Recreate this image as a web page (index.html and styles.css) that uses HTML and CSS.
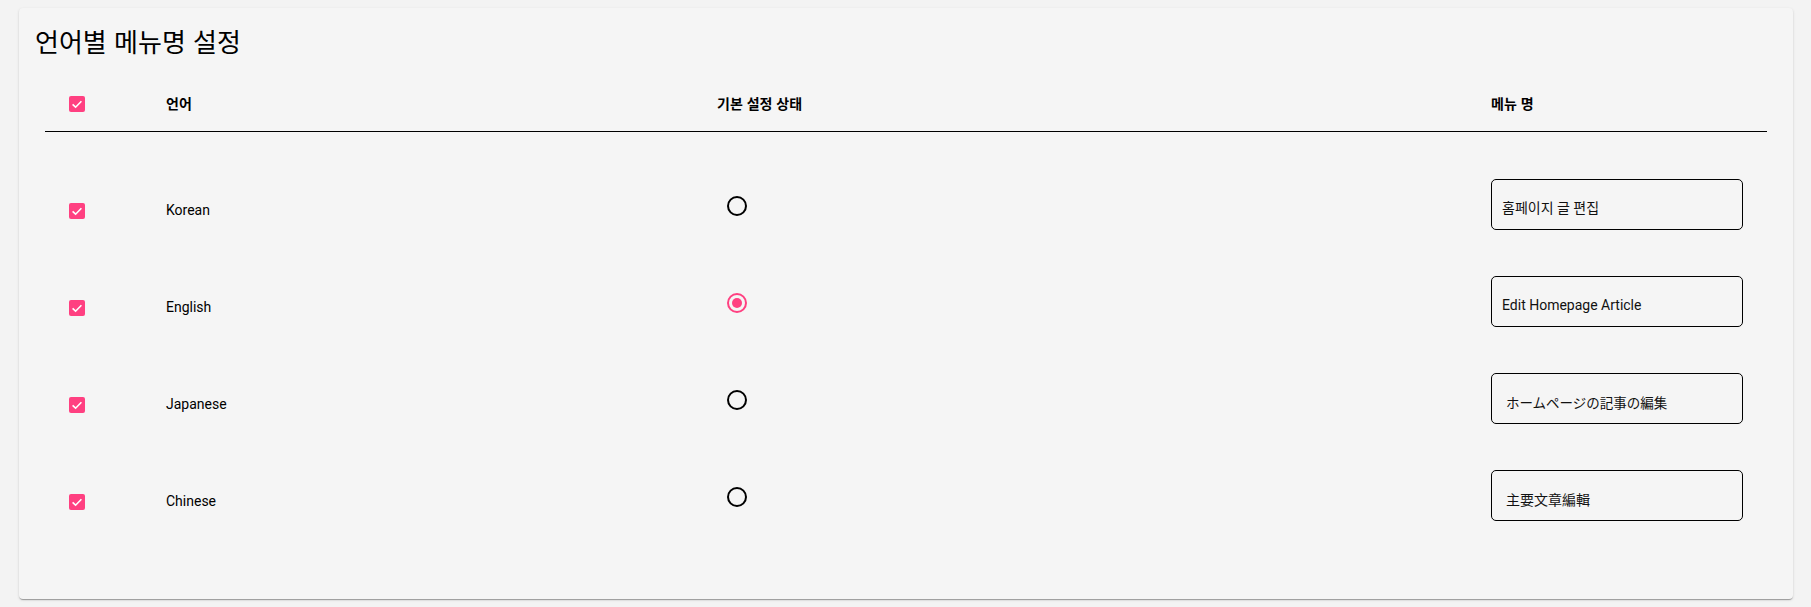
FILE: index.html
```html
<!DOCTYPE html>
<html lang="ko">
<head>
<meta charset="utf-8">
<title>언어별 메뉴명 설정</title>
<link rel="stylesheet" href="styles.css">
</head>
<body>
<div class="page">
  <section class="card">
    <h1 class="title">언어별 메뉴명 설정</h1>
    <div class="table">
      <div class="row head">
        <div class="cell c-check"><span class="checkbox"><svg viewBox="0 0 16 16" width="16" height="16"><polyline points="3.6,8.4 6.6,11.2 12.4,5.2" fill="none" stroke="#fff" stroke-width="1.6"/></svg></span></div>
        <div class="cell c-lang">언어</div>
        <div class="cell c-default">기본 설정 상태</div>
        <div class="cell c-name">메뉴 명</div>
      </div>
      <div class="body">
        <div class="row item">
          <div class="cell c-check"><span class="checkbox"><svg viewBox="0 0 16 16" width="16" height="16"><polyline points="3.6,8.4 6.6,11.2 12.4,5.2" fill="none" stroke="#fff" stroke-width="1.6"/></svg></span></div>
          <div class="cell c-lang">Korean</div>
          <div class="cell c-default"><span class="radio"></span></div>
          <div class="cell c-name"><div class="input" lang="ko">홈페이지 글 편집</div></div>
        </div>
        <div class="row item">
          <div class="cell c-check"><span class="checkbox"><svg viewBox="0 0 16 16" width="16" height="16"><polyline points="3.6,8.4 6.6,11.2 12.4,5.2" fill="none" stroke="#fff" stroke-width="1.6"/></svg></span></div>
          <div class="cell c-lang">English</div>
          <div class="cell c-default"><span class="radio checked"></span></div>
          <div class="cell c-name"><div class="input" lang="en">Edit Homepage Article</div></div>
        </div>
        <div class="row item">
          <div class="cell c-check"><span class="checkbox"><svg viewBox="0 0 16 16" width="16" height="16"><polyline points="3.6,8.4 6.6,11.2 12.4,5.2" fill="none" stroke="#fff" stroke-width="1.6"/></svg></span></div>
          <div class="cell c-lang">Japanese</div>
          <div class="cell c-default"><span class="radio"></span></div>
          <div class="cell c-name"><div class="input cjk-ja" lang="ja">ホームページの記事の編集</div></div>
        </div>
        <div class="row item">
          <div class="cell c-check"><span class="checkbox"><svg viewBox="0 0 16 16" width="16" height="16"><polyline points="3.6,8.4 6.6,11.2 12.4,5.2" fill="none" stroke="#fff" stroke-width="1.6"/></svg></span></div>
          <div class="cell c-lang">Chinese</div>
          <div class="cell c-default"><span class="radio"></span></div>
          <div class="cell c-name"><div class="input cjk-zh" lang="zh-Hant">主要文章編輯</div></div>
        </div>
      </div>
    </div>
  </section>
</div>
</body>
</html>
```

FILE: styles.css
```css
html, body {
  margin: 0;
  padding: 0;
  background: #f3f3f3;
}
body {
  font-family: Roboto, "Noto Sans CJK KR", sans-serif;
  color: #000;
}
.page {
  padding: 8px 18px 8px 19px;
  height: 607px;
  box-sizing: border-box;
}
.card {
  height: 591px;
  box-sizing: border-box;
  background: #f5f5f5;
  border-radius: 4px;
  box-shadow: 0 2px 1px -1px rgba(0,0,0,.2), 0 1px 1px 0 rgba(0,0,0,.14), 0 1px 3px 0 rgba(0,0,0,.12);
  padding: 17px 17px 16px 16px;
}
.title {
  margin: 0;
  font-family: "Noto Sans CJK KR", sans-serif;
  font-weight: 400;
  font-size: 26px;
  line-height: 32px;
}
.table {
  margin: 18px 9px 0 10px;
}
.row {
  display: grid;
  grid-template-columns: 121px 551px 774px 1fr;
}
.head {
  height: 56px;
  align-items: center;
  border-bottom: 1px solid #000;
  font-family: "Noto Sans CJK KR", sans-serif;
  font-weight: 700;
  font-size: 14px;
  line-height: 16px;
}
.head .c-check {
  padding-left: 24px;
  display: flex;
  padding-top: 1px;
}
.body {
  padding-top: 24px;
}
.item {
  height: 97px;
  align-items: start;
  font-size: 14px;
  line-height: 16px;
}
.item .c-check {
  padding-left: 24px;
  padding-top: 47px;
  display: flex;
}
.item .c-lang {
  padding-top: 46px;
}
.item .c-default {
  padding-top: 40px;
  padding-left: 10px;
  display: flex;
}
.item .c-name {
  padding-top: 23px;
}
.checkbox {
  width: 16px;
  height: 16px;
  background: #ff4081;
  border-radius: 2px;
  display: block;
}
.checkbox svg {
  display: block;
}
.radio {
  width: 20px;
  height: 20px;
  box-sizing: border-box;
  border: 2px solid #000;
  border-radius: 50%;
  display: flex;
  align-items: center;
  justify-content: center;
}
.radio.checked {
  border-color: #ff4081;
}
.radio.checked::after {
  content: "";
  width: 10px;
  height: 10px;
  border-radius: 50%;
  background: #ff4081;
}
.input {
  width: 252px;
  height: 51px;
  box-sizing: border-box;
  border: 1px solid #000;
  border-radius: 5px;
  padding: 7px 10px 0 10px;
  display: flex;
  align-items: center;
  font-size: 14px;
  line-height: 16px;
  color: #111;
}
.cjk-ja {
  font-family: "Noto Sans CJK JP", sans-serif;
  font-size: 13.5px;
  padding-left: 14px;
}
.cjk-zh {
  font-family: "Noto Sans CJK TC", sans-serif;
  padding-left: 14px;
}
```
